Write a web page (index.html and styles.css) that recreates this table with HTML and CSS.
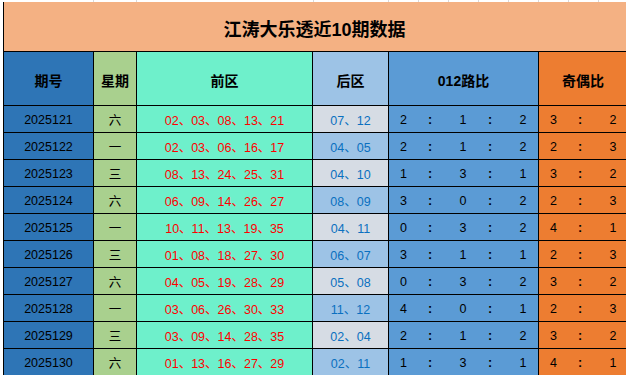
FILE: index.html
```html
<!DOCTYPE html>
<html lang="zh">
<head>
<meta charset="utf-8">
<title>江涛大乐透近10期数据</title>
<link rel="stylesheet" href="styles.css">
</head>
<body>
<div class="sheet">
  <div class="gridtop">
    <span class="g g1"></span><span class="g g2"></span><span class="g g3"></span><span class="g g4"></span>
    <span class="g"></span><span class="g"></span><span class="g"></span><span class="g"></span><span class="g"></span>
    <span class="g"></span><span class="g"></span><span class="g"></span>
  </div>
  <div class="table">
    <div class="title">江涛大乐透近10期数据</div>

    <div class="h c-qh">期号</div>
    <div class="h c-xq">星期</div>
    <div class="h c-qq">前区</div>
    <div class="h c-hq">后区</div>
    <div class="h c-lb">012路比</div>
    <div class="h c-jo">奇偶比</div>

    <div class="d c-qh">2025121</div><div class="d c-xq">六</div><div class="d c-qq">02、03、08、13、21</div><div class="d c-hq odd">07、12</div>
    <div class="d c-lb r5"><span>2</span><span class="col">:</span><span>1</span><span class="col">:</span><span>2</span></div>
    <div class="d c-jo r3"><span>3</span><span class="col">:</span><span>2</span></div>

    <div class="d c-qh">2025122</div><div class="d c-xq">一</div><div class="d c-qq">02、03、06、16、17</div><div class="d c-hq">04、05</div>
    <div class="d c-lb r5"><span>2</span><span class="col">:</span><span>1</span><span class="col">:</span><span>2</span></div>
    <div class="d c-jo r3"><span>2</span><span class="col">:</span><span>3</span></div>

    <div class="d c-qh">2025123</div><div class="d c-xq">三</div><div class="d c-qq">08、13、24、25、31</div><div class="d c-hq odd">04、10</div>
    <div class="d c-lb r5"><span>1</span><span class="col">:</span><span>3</span><span class="col">:</span><span>1</span></div>
    <div class="d c-jo r3"><span>3</span><span class="col">:</span><span>2</span></div>

    <div class="d c-qh">2025124</div><div class="d c-xq">六</div><div class="d c-qq">06、09、14、26、27</div><div class="d c-hq">08、09</div>
    <div class="d c-lb r5"><span>3</span><span class="col">:</span><span>0</span><span class="col">:</span><span>2</span></div>
    <div class="d c-jo r3"><span>2</span><span class="col">:</span><span>3</span></div>

    <div class="d c-qh">2025125</div><div class="d c-xq">一</div><div class="d c-qq">10、11、13、19、35</div><div class="d c-hq odd">04、11</div>
    <div class="d c-lb r5"><span>0</span><span class="col">:</span><span>3</span><span class="col">:</span><span>2</span></div>
    <div class="d c-jo r3"><span>4</span><span class="col">:</span><span>1</span></div>

    <div class="d c-qh">2025126</div><div class="d c-xq">三</div><div class="d c-qq">01、08、18、27、30</div><div class="d c-hq">06、07</div>
    <div class="d c-lb r5"><span>3</span><span class="col">:</span><span>1</span><span class="col">:</span><span>1</span></div>
    <div class="d c-jo r3"><span>2</span><span class="col">:</span><span>3</span></div>

    <div class="d c-qh">2025127</div><div class="d c-xq">六</div><div class="d c-qq">04、05、19、28、29</div><div class="d c-hq odd">05、08</div>
    <div class="d c-lb r5"><span>0</span><span class="col">:</span><span>3</span><span class="col">:</span><span>2</span></div>
    <div class="d c-jo r3"><span>3</span><span class="col">:</span><span>2</span></div>

    <div class="d c-qh">2025128</div><div class="d c-xq">一</div><div class="d c-qq">03、06、26、30、33</div><div class="d c-hq">11、12</div>
    <div class="d c-lb r5"><span>4</span><span class="col">:</span><span>0</span><span class="col">:</span><span>1</span></div>
    <div class="d c-jo r3"><span>2</span><span class="col">:</span><span>3</span></div>

    <div class="d c-qh">2025129</div><div class="d c-xq">三</div><div class="d c-qq">03、09、14、28、35</div><div class="d c-hq odd">02、04</div>
    <div class="d c-lb r5"><span>2</span><span class="col">:</span><span>1</span><span class="col">:</span><span>2</span></div>
    <div class="d c-jo r3"><span>3</span><span class="col">:</span><span>2</span></div>

    <div class="d c-qh">2025130</div><div class="d c-xq">六</div><div class="d c-qq">01、13、16、27、29</div><div class="d c-hq">02、11</div>
    <div class="d c-lb r5"><span>1</span><span class="col">:</span><span>3</span><span class="col">:</span><span>1</span></div>
    <div class="d c-jo r3"><span>4</span><span class="col">:</span><span>1</span></div>
  </div>
</div>
</body>
</html>
```
FILE: styles.css
```css
html, body {
  margin: 0;
  padding: 0;
  overflow: hidden;
  background: #fff;
}
body {
  font-family: "Liberation Sans", "Noto Sans CJK SC", sans-serif;
  color: #000;
}
.sheet {
  width: 640px;
}
.gridtop {
  display: flex;
  height: 2px;
}
.g {
  box-sizing: border-box;
  width: 30px;
  border-right: 1px solid #d9d9d9;
  flex: none;
}
.g1 { width: 94px; }
.g2 { width: 43px; }
.g3 { width: 177px; }
.g4 { width: 75px; }

.table {
  margin-left: 3px;
  display: grid;
  grid-template-columns: 89px 42px 175px 75px 149px 100px;
  grid-template-rows: 49px 53px repeat(10, 26px);
  column-gap: 1px;
  row-gap: 1px;
  background: #000;
  padding-left: 1px;
  padding-bottom: 1px;
}
.title {
  grid-column: 1 / -1;
  background: #f4b183;
  display: flex;
  align-items: center;
  justify-content: center;
  font-size: 18px;
  font-weight: bold;
  padding-right: 14px;
  padding-top: 2px;
}
.h, .d {
  display: flex;
  align-items: center;
  justify-content: center;
}
.h {
  font-size: 14px;
  font-weight: bold;
  padding-top: 3px;
}
.d {
  font-size: 12.5px;
  padding-top: 1px;
}
.c-qh { background: #2e75b6; }
.c-xq { background: #a9d08e; font-family: "Noto Sans CJK SC", sans-serif; }
.c-qq { background: #6ef0cb; }
.d.c-qq { color: #ff0000; }
.c-hq { background: #9dc3e6; }
.d.c-hq { color: #0a70c0; }
.d.c-hq.odd { background: #d6dce4; }
.c-lb { background: #5b9bd5; }
.c-jo { background: #ed7d31; padding-right: 12px; }
.d.c-jo { padding-right: 0; }

.r5, .r3 {
  display: grid;
  justify-content: start;
  justify-items: center;
  align-items: center;
}
.r5 { grid-template-columns: 29px 30px 30px 30px 30px; }
.r3 { grid-template-columns: 29px 30px 30px; }
.col {
  font-weight: bold;
  padding-right: 6px;
}
```
